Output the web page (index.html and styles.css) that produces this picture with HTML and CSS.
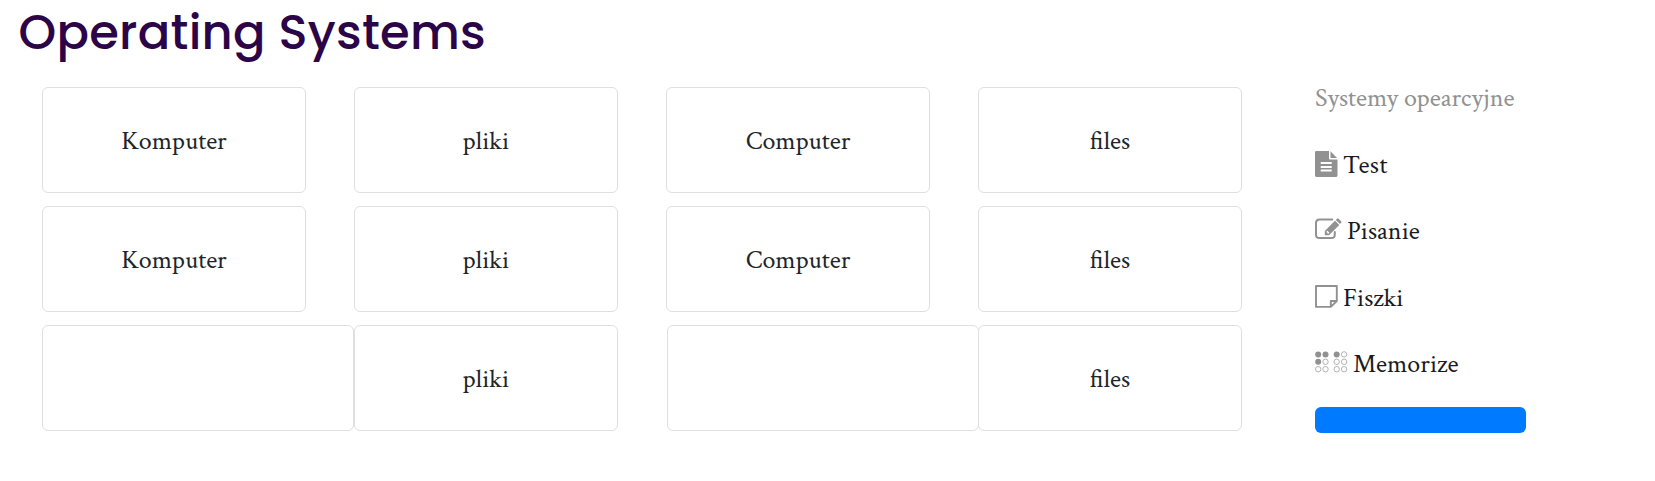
FILE: index.html
```html
<!DOCTYPE html>
<html lang="pl">
<head>
<meta charset="utf-8">
<title>Operating Systems</title>
<link rel="stylesheet" href="styles.css">
</head>
<body>
<h1 class="title">Operating Systems</h1>
<div class="layout">
  <main class="board">
    <div class="card">Komputer</div><div class="card">pliki</div><div class="card">Computer</div><div class="card">files</div>
    <div class="card">Komputer</div><div class="card">pliki</div><div class="card">Computer</div><div class="card">files</div>
    <div class="card wide"></div><div class="card">pliki</div><div class="card wide shifted"></div><div class="card">files</div>
  </main>
  <aside class="side">
    <div class="set-name">Systemy opearcyjne</div>
    <nav class="menu">
      <a class="item">
        <svg class="icon icon-file" width="23" height="26" viewBox="0 0 23 26"><path fill="#919191" fill-rule="evenodd" d="M1.4 0H14v7.2q0 1.3 1.3 1.3h7.2v16.1q0 1.4-1.4 1.4H1.4Q0 26 0 24.600V1.400Q0 0 1.400 0zM5.700 11v2h11v-2zM5.700 15v2h11v-2zM5.700 18.500v2h11v-2z"/><path fill="#919191" d="M15.500.3 22 6.900H15.500z"/></svg>
        <span class="label test">Test</span>
      </a>
      <a class="item">
        <svg class="icon icon-pen" width="27" height="22" viewBox="0 0 27 22"><path fill="none" stroke="#919191" stroke-width="2" stroke-linecap="round" d="M17.200 1.600H4.500Q1 1.600 1 5.100v11.300Q1 20 4.500 20h11.700q3.600 0 3.600-3.600v-2.500"/><path fill="#919191" fill-rule="evenodd" d="M20 2.700 24.300 7 14 17.200H9.800V13zM11.500 13.600v1h1v1.100h.9l1-1-2-2z"/><path fill="#919191" d="m20.800 1.900 1.200-1.200q.8-.8 1.600 0l2.500 2.500q.8.800 0 1.600l-1.100 1.300z"/></svg>
        <span class="label">Pisanie</span>
      </a>
      <a class="item">
        <svg class="icon icon-note" width="23" height="23" viewBox="0 0 23 23"><path fill="none" stroke="#919191" stroke-width="1.900" stroke-linejoin="round" d="M15.800 21.900H1V1h20.800v15zM15.800 21.900V16h6M15.800 21.900l6-5.900"/></svg>
        <span class="label">Fiszki</span>
      </a>
      <a class="item">
        <svg class="icon icon-dots" width="33" height="22" viewBox="0 0 33 22"><g fill="#919191"><circle cx="3.200" cy="3.400" r="3"/><circle cx="10.500" cy="3.400" r="3"/><circle cx="21.700" cy="3.400" r="3"/><circle cx="3.200" cy="10.800" r="3"/></g><g fill="none" stroke="#a0a0a0" stroke-width=".8"><circle cx="29.100" cy="3.400" r="2.700"/><circle cx="10.500" cy="10.800" r="2.700"/><circle cx="21.700" cy="10.800" r="2.700"/><circle cx="29.100" cy="10.800" r="2.700"/><circle cx="3.200" cy="18.200" r="2.700"/><circle cx="10.500" cy="18.200" r="2.700"/><circle cx="21.700" cy="18.200" r="2.700"/><circle cx="29.100" cy="18.200" r="2.700"/></g></svg>
        <span class="label">Memorize</span>
      </a>
    </nav>
    <button class="action" aria-label="Start"></button>
  </aside>
</div>
</body>
</html>
```
FILE: styles.css
```css
* { box-sizing: border-box; }
body {
  margin: 0;
  background: #fff;
  color: #212529;
  font: 26px/30px "Crimson Text", "Liberation Serif", serif;
}
.title {
  margin: 0;
  padding: 4px 0 0 18.500px;
  height: 87px;
  color: #2b0548;
  font: 500 48px/57px Poppins, Inter, sans-serif;
  letter-spacing: 0.26px;
  white-space: nowrap;
}
.layout { display: flex; padding-left: 42px; }
.board {
  display: grid;
  flex: none;
  grid-template-columns: repeat(4, 312px);
  grid-auto-rows: 106px;
  row-gap: 13px;
  width: 1273px;
}
.card {
  display: flex;
  align-items: center;
  justify-content: center;
  width: 264px;
  padding-top: 2px;
  border: 1px solid #dfdfdf;
  border-radius: 6px;
}
.wide { width: 312px; }
.shifted { margin-left: 1px; }
.side { width: 211px; }
.set-name {
  height: 66px;
  margin-top: -4px;
  color: #919191;
  white-space: nowrap;
}
.menu { display: grid; grid-template-rows: repeat(4, 66.33px); height: 258px; }
.item { display: flex; align-items: flex-start; gap: 5px; color: #1b1b1f; }
.icon { flex: none; }
.icon-file { margin-top: 2px; }
.icon-pen { margin-top: 2.700px; }
.icon-note { margin-top: 3.800px; }
.icon-dots { margin-top: 3px; }
.label { margin-top: 1px; }
.test { letter-spacing: 0.5px; }
.action {
  display: block;
  width: 211px;
  height: 26px;
  padding: 0;
  border: 0;
  border-radius: 6px;
  background: #007bff;
}
```
